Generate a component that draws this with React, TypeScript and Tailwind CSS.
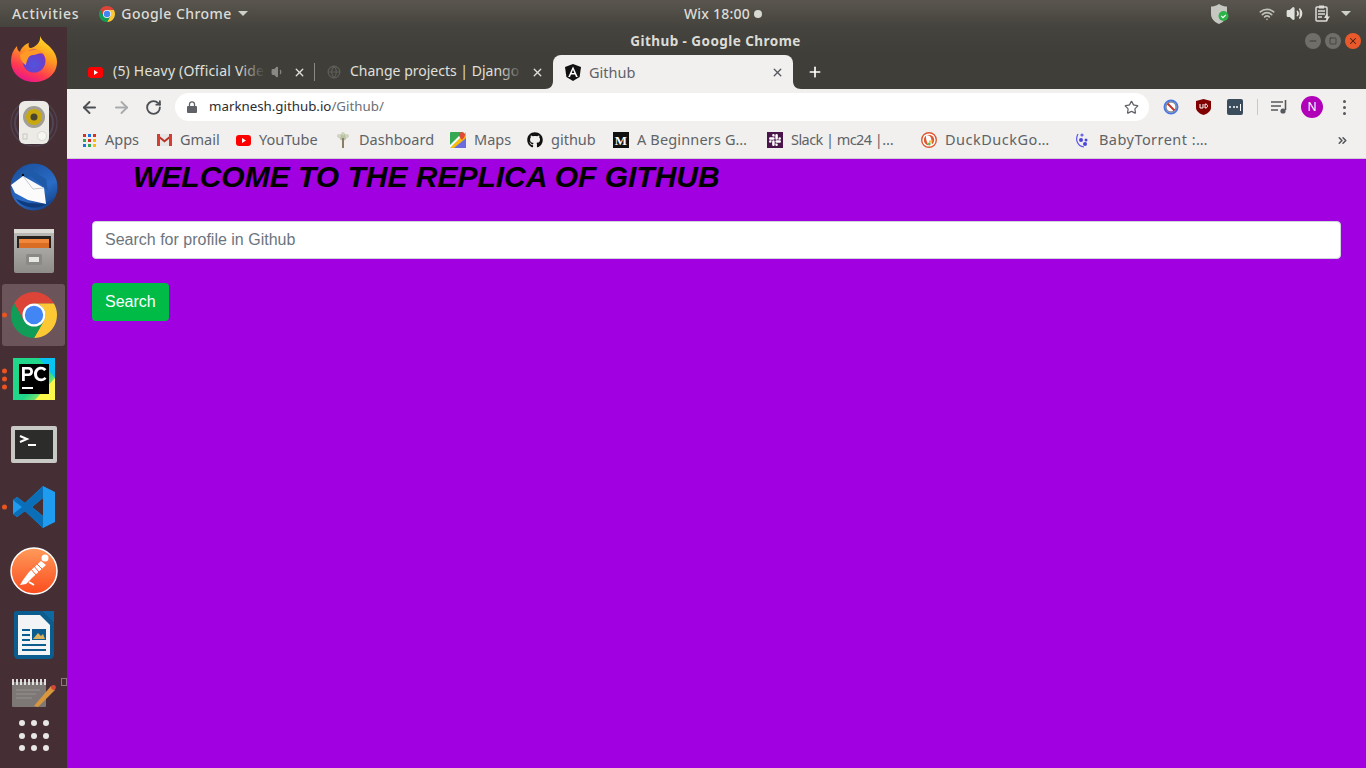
import { ArrowLeft, ArrowRight, RotateCw, Star, X, Plus, Volume1, Volume2, Wifi, Globe, Minus, Square, ChevronsRight } from "lucide-react";
import { FaGithub } from "react-icons/fa";
import { SiSlack } from "react-icons/si";

const ChromeLogo = ({ size }: { size: number }) => (
  <svg width={size} height={size} viewBox="4 4 40 40">
    <path d="M6.68 14A20 20 0 0 1 41.32 14L24 14A10 10 0 0 0 15.34 29Z" fill="#db4437" />
    <path d="M41.32 14A20 20 0 0 1 24 44L32.66 29A10 10 0 0 0 24 14Z" fill="#fcc934" />
    <path d="M24 44A20 20 0 0 1 6.68 14L15.34 29A10 10 0 0 0 32.66 29Z" fill="#0f9d58" />
    <circle cx="24" cy="24" r="10" fill="#fff" />
    <circle cx="24" cy="24" r="8" fill="#4285f4" />
  </svg>
);

const Firefox = () => (
  <svg width="46" height="48" viewBox="0 0 46 48">
    <defs>
      <linearGradient id="ffo" x1="0.75" y1="0" x2="0.3" y2="1">
        <stop offset="0" stopColor="#ffe226" />
        <stop offset="0.4" stopColor="#ff9a1f" />
        <stop offset="0.75" stopColor="#ff3a50" />
        <stop offset="1" stopColor="#e8148f" />
      </linearGradient>
      <radialGradient id="ffp" cx="0.5" cy="0.65" r="0.65">
        <stop offset="0" stopColor="#4f55dd" />
        <stop offset="0.7" stopColor="#6b3fcc" />
        <stop offset="1" stopColor="#a42fb0" />
      </radialGradient>
    </defs>
    <path d="M29 1C31 6 36 9 39 12C44 17 46 22 46 27C46 39 36 47 23 47C10 47 0 38 0 26C0 20 2 15 6 11C6 14 7 16 9 17C10 13 14 9 18 8C17 11 18 13 20 13C24 12 30 8 29 1Z" fill="url(#ffo)" />
    <circle cx="23" cy="26" r="11.5" fill="url(#ffp)" />
    <path d="M9 20C13 16 19 15 24 15C28 14 31 16 33 19C29 17 26 20 22 20C18 20 16 24 15 30C11 28 9 24 9 20Z" fill="#ff9a26" />
  </svg>
);

const Rhythmbox = () => (
  <svg width="48" height="48" viewBox="0 0 48 48">
    <circle cx="24" cy="24" r="23" fill="none" stroke="#5d5a70" strokeWidth="1.2" opacity="0.45" />
    <circle cx="24" cy="24" r="19" fill="none" stroke="#5d6080" strokeWidth="2" opacity="0.45" />
    <rect x="9" y="2" width="30" height="43" rx="6" fill="#ecebe6" />
    <circle cx="24" cy="18" r="11" fill="#a09e96" />
    <circle cx="24" cy="18" r="8" fill="#c9a80f" />
    <circle cx="24" cy="18" r="3.5" fill="#4a4530" />
    <circle cx="32" cy="37" r="4.5" fill="#f6f6f3" stroke="#d8d8d3" />
    <rect x="13" y="35" width="4" height="5" fill="none" stroke="#c8c8c2" />
  </svg>
);

const Thunderbird = () => (
  <svg width="48" height="48" viewBox="0 0 48 48">
    <defs>
      <linearGradient id="tb" x1="0.2" y1="0" x2="0.8" y2="1">
        <stop offset="0" stopColor="#1a4f9e" />
        <stop offset="0.6" stopColor="#2a6cc6" />
        <stop offset="1" stopColor="#123f86" />
      </linearGradient>
    </defs>
    <circle cx="24" cy="24" r="23.5" fill="url(#tb)" />
    <path d="M6 18C9 8 18 1 27 1C22 4 21 7 24 9L36 16L38 28L20 12L8 20Z" fill="#1e5aa8" />
    <circle cx="13" cy="12" r="1.2" fill="#0b0b0b" />
    <path d="M1 22L13 13L34 25L36 41L18 37L5 30Z" fill="#fbfbfb" />
    <path d="M13 13L23 26L34 25" fill="none" stroke="#c4c8d0" strokeWidth="1" />
    <path d="M6 36C12 45 30 50 43 36L36 41L18 40Z" fill="#0f3a7c" />
  </svg>
);

const Files = () => (
  <svg width="40" height="44" viewBox="0 0 40 44">
    <defs>
      <linearGradient id="fl" x1="0" y1="0" x2="0" y2="1">
        <stop offset="0" stopColor="#bdbcb8" />
        <stop offset="1" stopColor="#8e8d89" />
      </linearGradient>
    </defs>
    <rect x="0" y="0" width="40" height="44" rx="2" fill="url(#fl)" />
    <rect x="0" y="0" width="40" height="4" fill="#dcdbd6" />
    <rect x="3" y="7" width="34" height="12" fill="#26231f" />
    <rect x="5" y="10" width="30" height="4" fill="#f0873a" />
    <rect x="5" y="14" width="30" height="5" fill="#d96d23" />
    <rect x="12" y="25" width="16" height="11" rx="1.5" fill="#8a8985" />
    <rect x="15" y="28" width="10" height="5" fill="#e6e6e2" />
  </svg>
);

const PyCharm = () => (
  <svg width="42" height="42" viewBox="0 0 42 42">
    <defs>
      <linearGradient id="pyc" x1="0" y1="0" x2="1" y2="1">
        <stop offset="0" stopColor="#21d789" />
        <stop offset="0.6" stopColor="#21d789" />
        <stop offset="1" stopColor="#fcf84a" />
      </linearGradient>
    </defs>
    <rect width="42" height="42" fill="url(#pyc)" />
    <path d="M26 0L42 0L42 20Z" fill="#07c3f2" />
    <path d="M42 20L42 42L22 42Z" fill="#fcf84a" />
    <rect x="6" y="6" width="30" height="30" fill="#000" />
    <path d="M9 9H15.5C18.5 9 20 10.8 20 13.5C20 16.2 18.5 18 15.5 18H11.8V23H9ZM11.8 11.5V15.5H15.2C16.5 15.5 17.2 14.8 17.2 13.5C17.2 12.2 16.5 11.5 15.2 11.5Z" fill="#fff" />
    <path d="M33.5 20.5C32 22.3 30.4 23.2 28 23.2C24.2 23.2 21 20.5 21 16C21 11.5 24.2 8.8 28.1 8.8C30.5 8.8 32.1 9.7 33.4 11.3L31.3 13C30.5 12 29.5 11.4 28.1 11.4C25.8 11.4 24 13.2 24 16C24 18.8 25.8 20.6 28.1 20.6C29.5 20.6 30.5 20 31.4 18.9Z" fill="#fff" />
    <rect x="9" y="29" width="11" height="2" fill="#fff" />
  </svg>
);

const Terminal = () => (
  <svg width="46" height="37" viewBox="0 0 46 37" className="mt-[2px]">
    <rect width="46" height="37" rx="2" fill="#c8c8c4" />
    <rect x="4" y="4" width="38" height="29" fill="#2c2c2a" />
    <path d="M9 10L16 13L9 16" fill="none" stroke="#fff" strokeWidth="2" />
    <rect x="17" y="18" width="8" height="2" fill="#fff" />
  </svg>
);

const VSCode = () => (
  <svg width="42" height="42" viewBox="0 0 42 42">
    <path d="M30 0L42 6V36L30 42L12 25L4 31L0 28V14L4 11L12 17ZM30 12L19 21L30 30Z" fill="#1f9cf0" />
    <path d="M30 0L12 17L4 11L0 14L9 21L0 28L4 31L12 25L30 42L30 30L19 21L30 12Z" fill="#0a6fb8" />
  </svg>
);

const Postman = () => (
  <svg width="48" height="48" viewBox="0 0 48 48">
    <defs>
      <linearGradient id="pm" x1="0" y1="0" x2="0" y2="1">
        <stop offset="0" stopColor="#ff9a5a" />
        <stop offset="1" stopColor="#fb4d1e" />
      </linearGradient>
    </defs>
    <circle cx="24" cy="24" r="23" fill="url(#pm)" stroke="#fff" strokeWidth="1.5" />
    <circle cx="35" cy="11" r="3.5" fill="#fff" />
    <path d="M31 14L36 18L22 31L16 37L10 38L13 33L19 25Z" fill="#fff" />
    <path d="M20 21L26 28M23 18L29 25M26 16L32 22" stroke="#fb6a35" strokeWidth="1" />
    <path d="M19 35L24 38" stroke="#fff" strokeWidth="2" />
  </svg>
);

const Writer = () => (
  <svg width="40" height="48" viewBox="0 0 40 48">
    <path d="M2 0H28L40 12V44C40 46 38 48 36 48H4C2 48 0 46 0 44V2C0 1 1 0 2 0Z" fill="#0c5d8f" />
    <path d="M4 4H26L36 14V44H4Z" fill="#f2f4f5" />
    <path d="M28 0H40V12Z" fill="#0c6aa3" />
    <rect x="8" y="18" width="8" height="2" fill="#0c5d8f" />
    <rect x="8" y="23" width="8" height="2" fill="#0c5d8f" />
    <rect x="8" y="28" width="8" height="2" fill="#0c5d8f" />
    <rect x="18" y="18" width="14" height="11" fill="#0c5d8f" />
    <path d="M19 28L24 22L27 25L29 23L31 28Z" fill="#dcb35c" />
    <rect x="8" y="33" width="24" height="2" fill="#0c5d8f" />
    <rect x="8" y="38" width="24" height="2" fill="#0c5d8f" />
  </svg>
);

const Notepad = () => (
  <svg width="44" height="28" viewBox="0 0 44 28">
    <rect x="0" y="3" width="34" height="25" rx="1" fill="#7d7876" />
    <path d="M1 0V6M5 0V6M9 0V6M13 0V6M17 0V6M21 0V6M25 0V6M29 0V6M33 0V6" stroke="#ececec" strokeWidth="1.8" />
    <path d="M4 11H28M4 15H24M4 19H20" stroke="#96928f" strokeWidth="1" />
    <path d="M22 27L39 7L43 11L26 28Z" fill="#d9973d" />
    <circle cx="41.5" cy="8.5" r="2.4" fill="#d8453c" />
  </svg>
);

const AppsGrid = () => (
  <svg width="13" height="13" viewBox="0 0 13 13">
    {["#d93025", "#1a73e8", "#d93025", "#34a853", "#d93025", "#fbbc04", "#1a73e8", "#34a853", "#fbbc04"].map((c, i) => (
      <rect key={i} x={(i % 3) * 5} y={Math.floor(i / 3) * 5} width="3" height="3" fill={c} />
    ))}
  </svg>
);

const Gmail = () => (
  <svg width="15" height="12" viewBox="0 0 15 12">
    <path d="M0 0H15V12H0Z" fill="#e8e6e4" />
    <path d="M0 0L7.5 6L15 0V2.5L7.5 8.5L0 2.5Z" fill="#b8332a" />
    <rect x="0" y="0" width="3" height="12" fill="#d23f31" />
    <rect x="12" y="0" width="3" height="12" fill="#d23f31" />
  </svg>
);

const YouTube = () => (
  <svg width="15" height="11" viewBox="0 0 15 11">
    <rect width="15" height="11" rx="3" fill="#f00" />
    <path d="M6 3L10 5.5L6 8Z" fill="#fff" />
  </svg>
);

const Dashboard = () => (
  <svg width="14" height="16" viewBox="0 0 14 16">
    <circle cx="7" cy="5" r="3.5" fill="#b9c2a4" />
    <circle cx="3" cy="4" r="2" fill="#cfd4bc" />
    <circle cx="11" cy="4" r="2" fill="#cfd4bc" />
    <circle cx="7" cy="1.8" r="1.8" fill="#cfd4bc" />
    <rect x="6" y="6" width="2" height="10" fill="#8a7f63" />
  </svg>
);

const Maps = () => (
  <svg width="16" height="16" viewBox="0 0 16 16">
    <rect width="16" height="16" rx="1" fill="#34a853" />
    <path d="M0 16L16 0V8L8 16Z" fill="#fbbc04" />
    <path d="M0 13L13 0H16L0 16Z" fill="#fff" />
    <path d="M4 16L16 6V16Z" fill="#6a6ce0" />
    <path d="M12 0C10 0 9 1.5 9 3C9 5 12 8 12 8C12 8 15 5 15 3C15 1.5 14 0 12 0Z" fill="#e04a3a" />
  </svg>
);

const Medium = () => (
  <div className="flex h-4 w-4 items-center justify-center bg-[#111] font-['Liberation_Serif',serif] text-[13px] font-bold leading-none text-white">
    M
  </div>
);

const Duck = () => (
  <svg width="16" height="16" viewBox="0 0 16 16">
    <circle cx="8" cy="8" r="7.3" fill="#fff" stroke="#de5833" strokeWidth="1.4" />
    <circle cx="8" cy="8" r="5.2" fill="#de5833" />
    <path d="M5 3.5C9 2.5 10.5 6 10.5 9L11 13.5H7.5C6 10 4.5 7 5 3.5Z" fill="#fff" />
    <path d="M8 8.5H12L10.5 10.5H8Z" fill="#f6c02d" />
    <circle cx="8.3" cy="12" r="1.4" fill="#65bc46" />
  </svg>
);

const Baby = () => (
  <svg width="16" height="16" viewBox="0 0 16 16">
    <path d="M3 2C0 7 2 14 9 15" fill="none" stroke="#5a55f0" strokeWidth="1.2" />
    <circle cx="7" cy="3" r="1.6" fill="#6a66f0" />
    <circle cx="6" cy="8" r="2" fill="#4a46d8" />
    <circle cx="11" cy="8" r="1.5" fill="#4a46d8" />
    <circle cx="10" cy="12" r="2" fill="#4a46d8" />
  </svg>
);

const bookmarks = [
  { w: "w-[75px]", icon: <AppsGrid />, label: "Apps", text: "" },
  { w: "w-[79px]", icon: <Gmail />, label: "Gmail", text: "" },
  { w: "w-[100px]", icon: <YouTube />, label: "YouTube", text: "" },
  { w: "w-[115px]", icon: <Dashboard />, label: "Dashboard", text: "" },
  { w: "w-[77px]", icon: <Maps />, label: "Maps", text: "" },
  { w: "w-[86px]", icon: <FaGithub size={16} color="#111" />, label: "github", text: "" },
  { w: "w-[154px]", icon: <Medium />, label: "A Beginners G…", text: "tracking-[0.15px]" },
  { w: "w-[154px]", icon: <SiSlack size={16} className="bg-[#4a154b] p-[2px]" color="#fff" />, label: "Slack | mc24 |…", text: "tracking-[-0.55px]" },
  { w: "w-[154px]", icon: <Duck />, label: "DuckDuckGo…", text: "tracking-[0.5px]" },
  { w: "w-[154px]", icon: <Baby />, label: "BabyTorrent :…", text: "tracking-[0.45px]" },
];

const DockItem = ({ children, dots = 0, active = false }: { children: React.ReactNode; dots?: number; active?: boolean }) => (
  <div className="relative flex h-16 shrink-0 items-center justify-center">
    {active && <div className="absolute inset-x-[2px] inset-y-px rounded-[3px] bg-[#6b555a]" />}
    {dots > 0 && (
      <div className="absolute left-[2px] top-1/2 flex -translate-y-1/2 flex-col gap-[3px]">
        {Array.from({ length: dots }).map((_, i) => (
          <div key={i} className="h-[5px] w-[5px] rounded-full bg-[#e95420]" />
        ))}
      </div>
    )}
    <div className="relative flex">{children}</div>
  </div>
);

const App = () => {
  return (
    <div className="flex h-[768px] w-[1366px] flex-col overflow-hidden font-['Noto_Sans',sans-serif]">
      {/* gnome top bar */}
      <div className="relative flex h-[27px] shrink-0 items-center bg-linear-to-b from-[#5a564f] to-[#45433d] text-[14px] font-medium text-[#dcdcd6]">
        <span className="ml-3 tracking-[0.7px]">Activities</span>
        <span className="ml-5 flex items-center">
          <ChromeLogo size={16} />
        </span>
        <span className="ml-[6px] tracking-[0.45px]">Google Chrome</span>
        <div className="ml-[6px] h-0 w-0 border-x-[5px] border-t-[5px] border-x-transparent border-t-[#d0d0ca]" />
        <div className="absolute left-[684px] top-0 flex h-full items-center gap-[4px]">
          <span className="tracking-[0.2px]">Wix 18:00</span>
          <div className="h-2 w-2 rounded-full bg-[#d8d8d2]" />
        </div>
        <div className="absolute right-0 top-0 flex h-full items-center">
          <svg width="20" height="22" viewBox="0 0 20 22" className="mr-[29px]">
            <path d="M9 1C6 3 3 3.5 1 3.5V11C1 16 5 19.5 9 21C13 19.5 17 16 17 11V3.5C15 3.5 12 3 9 1Z" fill="#c7c7c2" />
            <circle cx="13.5" cy="13" r="5" fill="#2eb24a" />
            <path d="M11.3 13L13 14.6L15.8 11.8" fill="none" stroke="#fff" strokeWidth="1.2" />
          </svg>
          <Wifi size={16} strokeWidth={2.5} className="mr-[11px] text-[#c0c0ba]" />
          <Volume2 size={17} strokeWidth={2.2} fill="#e0e0da" className="mr-[12px] text-[#e0e0da]" />
          <svg width="15" height="17" viewBox="0 0 15 17" className="mr-[11px]">
            <rect x="1" y="2" width="11" height="14" rx="1" fill="none" stroke="#dcdcd6" strokeWidth="1.5" />
            <rect x="4" y="0.5" width="5" height="3" fill="#dcdcd6" />
            <path d="M3 6H10M3 9H10M3 12H7" stroke="#dcdcd6" strokeWidth="1.3" />
            <path d="M12 8L9 13H12L11 17L15 11.5H12.5Z" fill="#dcdcd6" />
          </svg>
          <div className="mr-[15px] h-0 w-0 border-x-[5px] border-t-[5px] border-x-transparent border-t-[#d0d0ca]" />
        </div>
      </div>

      <div className="flex min-h-0 flex-1">
        {/* launcher */}
        <div className="relative flex w-[67px] shrink-0 flex-col bg-[#452f35]">
          <DockItem><Firefox /></DockItem>
          <DockItem><Rhythmbox /></DockItem>
          <DockItem><Thunderbird /></DockItem>
          <DockItem><Files /></DockItem>
          <DockItem active dots={1}><ChromeLogo size={46} /></DockItem>
          <DockItem dots={3}><PyCharm /></DockItem>
          <DockItem><Terminal /></DockItem>
          <DockItem dots={1}><VSCode /></DockItem>
          <DockItem><Postman /></DockItem>
          <DockItem><Writer /></DockItem>
          <div className="flex h-[52px] shrink-0 items-center justify-center">
            <Notepad />
          </div>
          <div className="mt-px grid w-fit shrink-0 grid-cols-3 gap-x-[6px] gap-y-[6.5px] self-center">
            {Array.from({ length: 9 }).map((_, i) => (
              <div key={i} className="h-[6px] w-[6px] rounded-full bg-[#e8e6e6]" />
            ))}
          </div>
          <div className="absolute left-[61px] top-[651px] h-[8px] w-[6px] border border-[#8a7b7e]" />
        </div>

        <div className="flex min-w-0 flex-1 flex-col">
          {/* window title */}
          <div className="relative flex h-[28px] shrink-0 items-center justify-center bg-linear-to-b from-[#45433d] to-[#3f3e39] text-[13.5px] font-bold tracking-[0.45px] text-[#dcdcd6]">
            <span className="mr-[2px]">Github - Google Chrome</span>
            <div className="absolute right-[5px] top-[6px] flex gap-1">
              <div className="flex h-4 w-4 items-center justify-center rounded-full bg-[#6f6e68]">
                <Minus size={10} className="text-[#33322e]" />
              </div>
              <div className="flex h-4 w-4 items-center justify-center rounded-full bg-[#6f6e68]">
                <Square size={8} className="text-[#33322e]" />
              </div>
              <div className="flex h-4 w-4 items-center justify-center rounded-full bg-[#e9592b]">
                <X size={10} strokeWidth={2.5} className="text-[#4a2414]" />
              </div>
            </div>
          </div>

          {/* tabs */}
          <div className="flex h-[34px] shrink-0 bg-[#3f3e39] pl-2 text-[14px] leading-[20px] text-[#e0e0dc]">
            <div className="relative flex w-[239px] items-center pl-[13px]">
              <YouTube />
              <span className="mb-[2px] ml-[10px] whitespace-nowrap tracking-[0.2px]">(5) Heavy (Official Vide</span>
              <div className="absolute left-[164px] top-0 h-full w-[26px] bg-linear-to-r from-transparent to-[#3f3e39]" />
              <Volume1 size={14} fill="#8a8a84" className="absolute left-[196px] text-[#8a8a84]" />
              <X size={13} strokeWidth={2.5} className="absolute left-[218px]" />
            </div>
            <div className="my-[8px] w-px bg-[#8a8a84]" />
            <div className="relative flex w-[238px] items-center pl-[12px]">
              <Globe size={14} className="text-[#5f5e59]" />
              <span className="mb-[2px] ml-[9px] whitespace-nowrap">Change projects | Django</span>
              <div className="absolute left-[184px] top-0 h-full w-[24px] bg-linear-to-r from-transparent to-[#3f3e39]" />
              <X size={13} strokeWidth={2.5} className="absolute left-[216px]" />
            </div>
            <div className="relative flex w-[240px] items-center rounded-t-[8px] bg-[#f1f0ee] pl-[12px] text-[14.5px] text-[#5f6368]">
              <svg width="16" height="17" viewBox="0 0 16 17" className="shrink-0">
                <path d="M8 0L16 3L14.6 13L8 17L1.4 13L0 3Z" fill="#111" />
                <path d="M8 2.5L3.2 13H5L6 10.6H10L11 13H12.8ZM6.7 9L8 5.8L9.3 9Z" fill="#fff" />
              </svg>
              <span className="ml-2">Github</span>
              <X size={13} strokeWidth={2.5} className="absolute right-[9px] text-[#55585c]" />
              <svg width="8" height="8" viewBox="0 0 8 8" className="absolute -left-2 bottom-0">
                <path d="M8 0V8H0C5 8 8 5 8 0Z" fill="#f1f0ee" />
              </svg>
              <svg width="8" height="8" viewBox="0 0 8 8" className="absolute -right-2 bottom-0">
                <path d="M0 0V8H8C3 8 0 5 0 0Z" fill="#f1f0ee" />
              </svg>
            </div>
            <div className="ml-[14px] flex items-center">
              <Plus size={16} strokeWidth={2.5} className="text-white" />
            </div>
          </div>

          {/* toolbar */}
          <div className="flex h-9 shrink-0 items-center bg-[#f1f0ee] pl-[6px] pr-[6px]">
            <div className="flex h-8 w-8 items-center justify-center">
              <ArrowLeft size={19} strokeWidth={2.4} className="text-[#4c4f53]" />
            </div>
            <div className="flex h-8 w-8 items-center justify-center">
              <ArrowRight size={19} strokeWidth={2.4} className="text-[#a8aaac]" />
            </div>
            <div className="flex h-8 w-8 items-center justify-center">
              <RotateCw size={17} strokeWidth={2.6} className="text-[#4c4f53]" />
            </div>
            <div className="mx-[6px] flex h-7 flex-1 items-center rounded-full bg-white pl-[12px] pr-[10px] text-[13.3px]">
              <svg width="10" height="12" viewBox="0 0 10 12">
                <path d="M2.5 5V3.2C2.5 1.8 3.6 0.8 5 0.8C6.4 0.8 7.5 1.8 7.5 3.2V5" fill="none" stroke="#5f6368" strokeWidth="1.3" />
                <rect y="5" width="10" height="7" rx="1" fill="#5f6368" />
              </svg>
              <span className="ml-[12px] text-[#2b2d30]">marknesh.github.io</span>
              <span className="text-[#6b6f74]">/Github/</span>
              <Star size={15} strokeWidth={2} className="ml-auto text-[#5f6368]" />
            </div>
            <div className="flex h-8 w-8 items-center justify-center">
              <svg width="16" height="16" viewBox="0 0 16 16">
                <circle cx="8" cy="8" r="6.5" fill="#fff" stroke="#4a78e0" strokeWidth="2" />
                <circle cx="8" cy="8" r="5" fill="none" stroke="#6a6a6a" strokeWidth="1" />
                <path d="M4.5 4.5L11.5 11.5" stroke="#c0362c" strokeWidth="2" />
              </svg>
            </div>
            <div className="flex h-8 w-8 items-center justify-center">
              <svg width="15" height="16" viewBox="0 0 15 16">
                <path d="M7.5 0L15 2V9C15 12 11 15 7.5 16C4 15 0 12 0 9V2Z" fill="#800000" />
                <path d="M4 5V9H7V5M9 5V9C11 9 11.5 8 11.5 7C11.5 6 11 5 9 5Z" fill="none" stroke="#fff" strokeWidth="1" />
              </svg>
            </div>
            <div className="flex h-8 w-8 items-center justify-center">
              <div className="flex h-4 w-4 items-center justify-center gap-[1.5px] rounded-[2px] bg-[#3b4c5c]">
                <div className="h-[2px] w-[2px] rounded-full bg-white" />
                <div className="h-[2px] w-[2px] rounded-full bg-white" />
                <div className="h-[2px] w-[2px] rounded-full bg-white" />
                <div className="h-[7px] w-px bg-white" />
              </div>
            </div>
            <div className="flex h-8 w-3 items-center justify-center">
              <div className="h-4 w-px bg-[#c8c8c6]" />
            </div>
            <div className="flex h-8 w-8 items-center justify-center">
              <svg width="16" height="14" viewBox="0 0 16 14">
                <path d="M0 2H12M0 6H10M0 10H7" stroke="#55585c" strokeWidth="1.6" />
                <path d="M14.5 0V10" stroke="#55585c" strokeWidth="1.6" />
                <circle cx="12" cy="11" r="2.6" fill="#55585c" />
              </svg>
            </div>
            <div className="ml-px flex h-8 w-8 items-center justify-center">
              <div className="flex h-[22px] w-[22px] items-center justify-center rounded-full bg-[#b000b8] text-[12px] text-white">N</div>
            </div>
            <div className="flex h-8 w-8 flex-col items-center justify-center gap-[3px]">
              <div className="h-[3px] w-[3px] rounded-full bg-[#55585c]" />
              <div className="h-[3px] w-[3px] rounded-full bg-[#55585c]" />
              <div className="h-[3px] w-[3px] rounded-full bg-[#55585c]" />
            </div>
          </div>

          {/* bookmarks */}
          <div className="flex h-[34px] shrink-0 items-center border-b border-[#cfcfcd] bg-[#f1f0ee] pb-[3px] pl-[14px] text-[14.5px] text-[#5f6368]">
            {bookmarks.map((b) => (
              <div key={b.label} className={`flex items-center ${b.w}`}>
                <div className="flex w-4 shrink-0 items-center justify-center">{b.icon}</div>
                <span className={`ml-2 whitespace-nowrap ${b.text}`}>{b.label}</span>
              </div>
            ))}
            <ChevronsRight size={13} strokeWidth={3} className="ml-auto mr-[17px] text-[#55585c]" />
          </div>

          {/* page */}
          <div className="min-h-0 flex-1 bg-[#a100e0] px-[25px] font-['Liberation_Sans',sans-serif]">
            <h1 className="ml-[41px] h-[38px] text-[30px] font-bold italic leading-[36px] text-black">WELCOME TO THE REPLICA OF GITHUB</h1>
            <input
              className="mt-6 block h-[38px] w-full rounded-[4px] border border-[#ced4da] bg-white px-3 text-base text-[#495057] placeholder:text-[#6c757d]"
              placeholder="Search for profile in Github"
            />
            <button className="mt-6 h-[38px] rounded-[4px] bg-[#00bc46] px-[13px] text-base text-white">Search</button>
          </div>
        </div>
      </div>
    </div>
  );
};

export default App;
